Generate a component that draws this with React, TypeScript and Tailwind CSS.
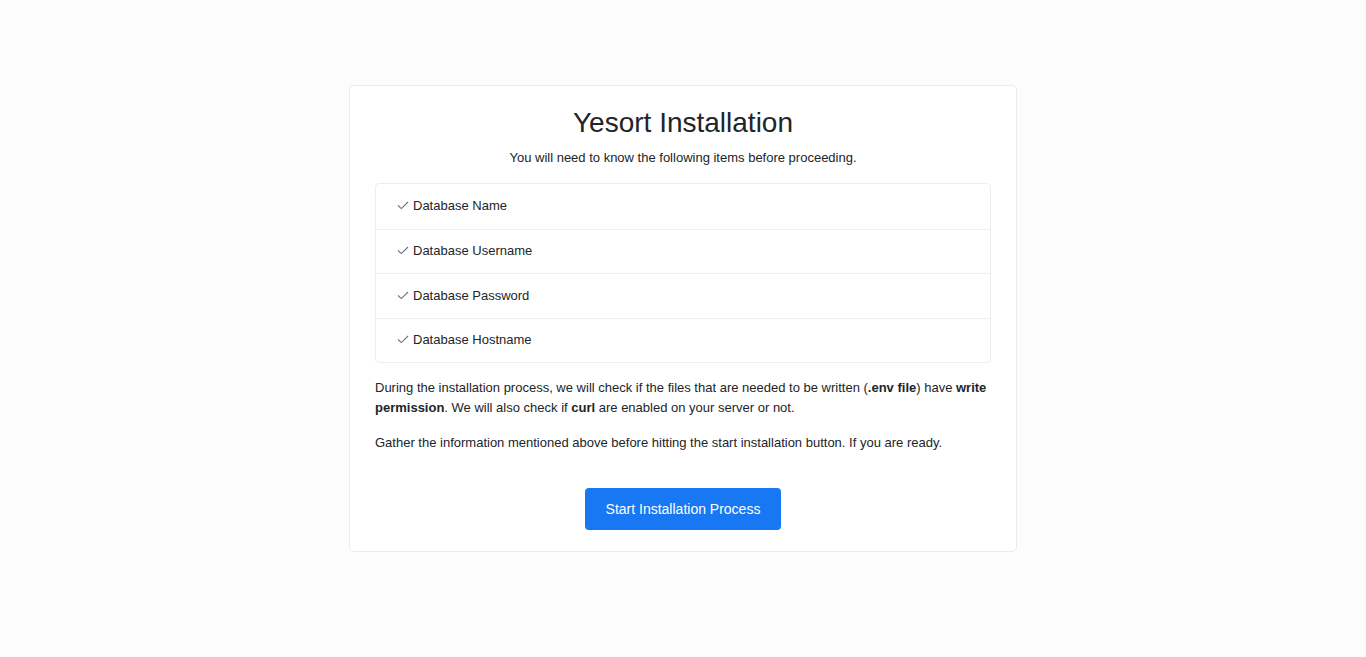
import React from 'react';

const items = ['Database Name', 'Database Username', 'Database Password', 'Database Hostname'];

const Check = () => (
  <svg width="12" height="9" viewBox="0 0 12 9" fill="none" className="mr-[4px] shrink-0">
    <path d="M1 4.5 L4.3 7.6 L11 1" stroke="#6b7280" strokeWidth="1.1" />
  </svg>
);

const App: React.FC = () => {
  return (
    <div className="min-h-screen bg-[#fcfcfc] pt-[85px] font-['Liberation_Sans',Arial,sans-serif] text-[#212529]">
      <div className="mx-auto w-[668px] rounded-[5px] border border-[#e9ecef] bg-white px-[25px] pt-[18px] pb-[21px]">
        <h1 className="text-center text-[28px] leading-[38px]">Yesort Installation</h1>
        <p className="mt-[6px] text-center text-[13px] leading-[20px]">
          You will need to know the following items before proceeding.
        </p>
        <ul className="mt-[15px] rounded-[4px] border border-[#eceef1]">
          {items.map((item, i) => (
            <li
              key={item}
              className={`flex h-[44.5px] items-center pl-[21px] pb-[1px] text-[13px] ${i > 0 ? 'border-t border-[#eceef1]' : ''}`}
            >
              <Check />
              {item}
            </li>
          ))}
        </ul>
        <p className="mt-[15px] text-[13px] leading-[20px]">
          During the installation process, we will check if the files that are needed to be written (<b>.env file</b>) have <b>write permission</b>. We will also check if <b>curl</b> are enabled on your server or not.
        </p>
        <p className="mt-[15px] text-[13px] leading-[20px]">
          Gather the information mentioned above before hitting the start installation button. If you are ready.
        </p>
        <div className="mt-[35px] flex justify-center">
          <button className="h-[42px] w-[196px] rounded-[4px] bg-[#1877f2] text-[14px] text-white">
            Start Installation Process
          </button>
        </div>
      </div>
    </div>
  );
};

export default App;
